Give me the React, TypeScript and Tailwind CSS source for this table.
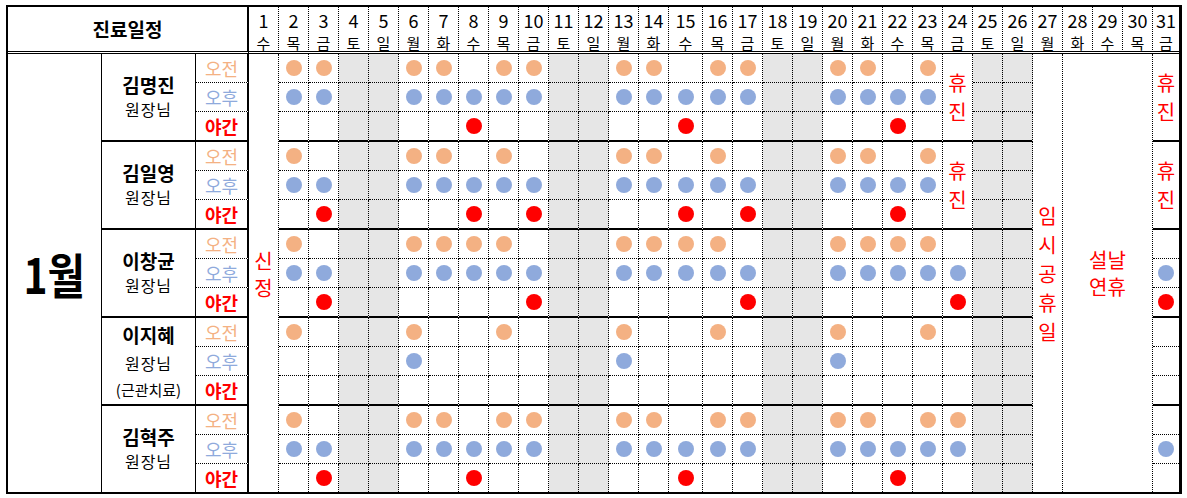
import React from 'react';

const DOW = ['수', '목', '금', '토', '일', '월', '화'];
const DAYS = Array.from({ length: 31 }, (_, i) => i + 1);
const dowOf = (d: number) => DOW[(d - 1) % 7];
const isWeekend = (d: number) => dowOf(d) === '토' || dowOf(d) === '일';

type Group = {
  name: string;
  titles: string[];
  am: number[];
  pm: number[];
  night: number[];
  closed: number[];
};

const GROUPS: Group[] = [
  {
    name: '김명진',
    titles: ['원장님'],
    am: [2, 3, 6, 7, 9, 10, 13, 14, 16, 17, 20, 21, 23],
    pm: [2, 3, 6, 7, 8, 9, 10, 13, 14, 15, 16, 17, 20, 21, 22, 23],
    night: [8, 15, 22],
    closed: [24, 31],
  },
  {
    name: '김일영',
    titles: ['원장님'],
    am: [2, 6, 7, 9, 13, 14, 16, 20, 21, 23],
    pm: [2, 3, 6, 7, 8, 9, 10, 13, 14, 15, 16, 17, 20, 21, 22, 23],
    night: [3, 8, 10, 15, 17, 22],
    closed: [24, 31],
  },
  {
    name: '이창균',
    titles: ['원장님'],
    am: [2, 6, 7, 8, 9, 13, 14, 15, 16, 20, 21, 22, 23],
    pm: [2, 3, 6, 7, 8, 9, 10, 13, 14, 15, 16, 17, 20, 21, 22, 23, 24, 31],
    night: [3, 10, 17, 24, 31],
    closed: [],
  },
  {
    name: '이지혜',
    titles: ['원장님', '(근관치료)'],
    am: [2, 6, 9, 13, 16, 20, 23],
    pm: [6, 13, 20],
    night: [],
    closed: [],
  },
  {
    name: '김혁주',
    titles: ['원장님'],
    am: [2, 6, 7, 9, 10, 13, 14, 16, 17, 20, 21, 23, 24],
    pm: [2, 3, 6, 7, 8, 9, 10, 13, 14, 15, 16, 17, 20, 21, 22, 23, 24, 31],
    night: [3, 8, 15, 22],
    closed: [],
  },
];

const MERGED = new Set([1, 27, 28, 29, 30]);
const LAST = GROUPS.length - 1;

const RIGHT_DOT = 'border-r border-r-black [border-right-style:dotted]';
const BOTTOM_DOT = 'border-b border-b-black [border-bottom-style:dotted]';
const BOTTOM_THICK = 'border-b-2 border-b-black';
const HEAD_BOTTOM = 'border-b-[3px] border-b-black [border-bottom-style:double]';

function Dot({ kind }: { kind: 0 | 1 | 2 }) {
  const cls =
    kind === 0 ? 'bg-[#f4b183]' : kind === 1 ? 'bg-[#8faadc]' : 'bg-[#ff0000]';
  return <div className={`w-4 h-4 rounded-full ${cls}`} />;
}

function VText({ chars, lead }: { chars: string[]; lead: 'a' | 'b' }) {
  return (
    <div className="flex flex-col items-center text-[#ff0000] text-[20px]">
      {chars.map((c, i) => (
        <div key={i} className={lead === 'a' ? 'leading-[29px]' : 'leading-[27px]'}>
          {c}
        </div>
      ))}
    </div>
  );
}

const LABELS = [
  { t: '오전', cls: 'text-[#f4b183]' },
  { t: '오후', cls: 'text-[#8faadc]' },
  { t: '야간', cls: 'text-[#ff0000] font-bold' },
];

export default function App() {
  const cells: React.ReactNode[] = [];

  // header
  cells.push(
    <div
      key="h-title"
      className={`flex items-center justify-center border-r-2 border-r-black ${HEAD_BOTTOM} text-[19px] font-bold text-black`}
      style={{ gridColumn: '1 / span 3', gridRow: '1' }}
    >
      진료일정
    </div>
  );
  DAYS.forEach((d) => {
    cells.push(
      <div
        key={`h-${d}`}
        className={`flex flex-col items-center pt-[3px] ${HEAD_BOTTOM} ${d === 31 ? '' : RIGHT_DOT}`}
        style={{ gridColumn: `${d + 3}`, gridRow: '1' }}
      >
        <div className="text-[18px] leading-[20px] text-black">{d}</div>
        <div className="text-[15px] leading-[16px] mt-[5px] text-black">{dowOf(d)}</div>
      </div>
    );
  });

  // month
  cells.push(
    <div
      key="month"
      className="flex items-center justify-center border-r border-r-black"
      style={{ gridColumn: '1', gridRow: '2 / span 15' }}
    >
      <div className="text-[48px] leading-none font-bold text-black scale-x-[0.85]">1월</div>
    </div>
  );

  // merged special columns
  cells.push(
    <div
      key="m1"
      className={`flex items-center justify-center bg-white ${RIGHT_DOT}`}
      style={{ gridColumn: '4', gridRow: '2 / span 15' }}
    >
      <div className="pt-[2px]">
        <VText chars={['신', '정']} lead="b" />
      </div>
    </div>
  );
  cells.push(
    <div
      key="m27"
      className={`flex items-center justify-center bg-white ${RIGHT_DOT}`}
      style={{ gridColumn: '30', gridRow: '2 / span 15' }}
    >
      <VText chars={['임', '시', '공', '휴', '일']} lead="a" />
    </div>
  );
  cells.push(
    <div
      key="m28"
      className={`flex items-center justify-center bg-white ${RIGHT_DOT}`}
      style={{ gridColumn: '31 / span 3', gridRow: '2 / span 15' }}
    >
      <VText chars={['설날', '연휴']} lead="b" />
    </div>
  );

  GROUPS.forEach((g, gi) => {
    const row0 = 2 + gi * 3;
    const lastGroup = gi === LAST;
    // name
    cells.push(
      <div
        key={`n-${gi}`}
        className={`flex flex-col items-center justify-center border-r border-r-black text-black ${
          lastGroup ? '' : BOTTOM_THICK
        }`}
        style={{ gridColumn: '2', gridRow: `${row0} / span 3` }}
      >
        <div
          className={`text-[19px] font-bold ${gi === 3 ? 'leading-[28px]' : 'leading-[25px]'}`}
        >
          {g.name}
        </div>
        {g.titles.map((t, ti) => (
          <div
            key={ti}
            className={
              ti === 0
                ? `text-[16px] tracking-[1px] ${gi === 3 ? 'leading-[28px]' : 'leading-[25px]'}`
                : 'text-[15px] leading-[25px]'
            }
          >
            {t}
          </div>
        ))}
      </div>
    );
    // labels
    LABELS.forEach((l, s) => {
      const bottom = s < 2 ? BOTTOM_DOT : lastGroup ? '' : BOTTOM_THICK;
      cells.push(
        <div
          key={`l-${gi}-${s}`}
          className={`flex items-center justify-center border-r-2 border-r-black text-[18px] ${bottom} ${l.cls}`}
          style={{ gridColumn: '3', gridRow: `${row0 + s}` }}
        >
          {l.t}
        </div>
      );
    });
    // day cells
    DAYS.forEach((d) => {
      if (MERGED.has(d)) return;
      const right = d === 31 ? '' : RIGHT_DOT;
      const bg = isWeekend(d) ? 'bg-[#e6e6e6]' : 'bg-white';
      if (g.closed.includes(d)) {
        cells.push(
          <div
            key={`c-${gi}-${d}`}
            className={`flex items-center justify-center ${bg} ${right} ${lastGroup ? '' : BOTTOM_THICK}`}
            style={{ gridColumn: `${d + 3}`, gridRow: `${row0} / span 3` }}
          >
            <VText chars={['휴', '진']} lead="a" />
          </div>
        );
        return;
      }
      const lists = [g.am, g.pm, g.night];
      [0, 1, 2].forEach((s) => {
        const bottom = s < 2 ? BOTTOM_DOT : lastGroup ? '' : BOTTOM_THICK;
        const on = lists[s].includes(d);
        cells.push(
          <div
            key={`c-${gi}-${d}-${s}`}
            className={`flex items-center justify-center ${bg} ${right} ${bottom}`}
            style={{ gridColumn: `${d + 3}`, gridRow: `${row0 + s}` }}
          >
            {on && <Dot kind={s as 0 | 1 | 2} />}
          </div>
        );
      });
    });
  });

  return (
    <div className="w-[1187px] h-[498px] bg-white font-['Noto_Sans_CJK_KR',sans-serif] pt-[5px] pl-[6px]">
      <div className="grid w-fit border-2 border-r-[3px] border-black bg-white grid-cols-[94px_94px_53px_repeat(14,30px)_34px_repeat(15,30px)_26px] grid-rows-[47px_29px_29px_30px_29px_29px_30px_29px_29px_30px_29px_29px_30px_29px_29px_28px]">
        {cells}
      </div>
    </div>
  );
}
